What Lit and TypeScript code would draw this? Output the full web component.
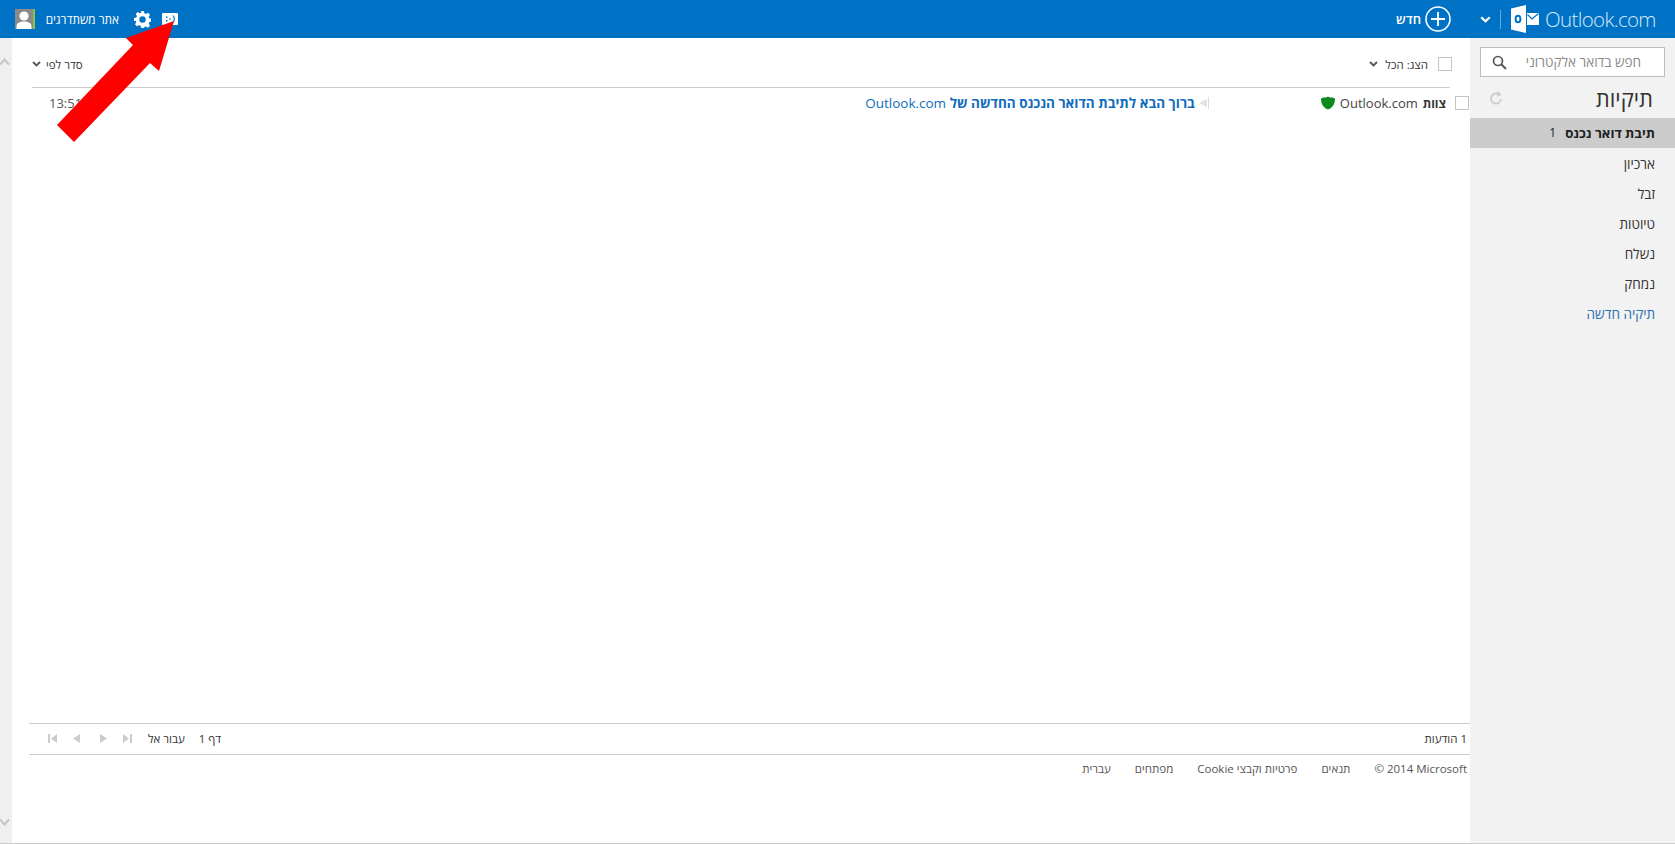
import { LitElement, html, css, svg } from "lit";
import { customElement } from "lit/decorators.js";

const chev = (c: string, w = 9, h = 6) => html`<svg width=${w} height=${h} viewBox="0 0 9 6" preserveAspectRatio="none"><path d="M1 1l3.500 3.500L8 1" fill="none" stroke=${c} stroke-width="1.800"/></svg>`;

@customElement("app-root")
export class AppRoot extends LitElement {
  static styles = css`
    :host { display: block; position: relative; width: 1675px; height: 844px; overflow: hidden; background: #fff;
      font-family: "Open Sans", "Liberation Sans", sans-serif; font-size: 11.5px; color: #333; }
    .top { height: 38px; background: #0072c6; color: #fff; display: flex; justify-content: space-between; align-items: center; }
    .tl, .tr { display: flex; align-items: center; }
    .tl { padding-left: 15px; }
    .tr { padding-right: 19px; }
    .avatar { width: 20px; height: 20px; display: block; }
    .user { margin-left: 10px; width: 74px; font-size: 11.8px; white-space: nowrap; }
    .gear { margin-left: 15px; display: block; }
    .smile { margin-left: 11px; display: block; }
    .new { font-size: 13px; font-weight: 600; margin-right: 4px; }
    .plus { display: block; margin-right: 29px; }
    .sep { width: 1px; height: 19px; background: #6aa8d9; margin: 0 9px; }
    .logo { display: block; margin-right: 6px; }
    .brand { font-size: 20.5px; font-weight: 300; color: #d5e8f6; letter-spacing: -0.65px; line-height: 38px; width: 111px; white-space: nowrap; }
    .body { height: 805px; display: flex; border-bottom: 1px solid #ccc; }
    .scroll { width: 12px; background: #efefef; display: flex; flex-direction: column; justify-content: space-between; align-items: flex-start; padding: 20px 0 17px; box-sizing: border-box; }
    .main { flex: 1; display: flex; flex-direction: column; min-width: 0; }
    .tools { height: 50px; margin: 0 20px; box-sizing: border-box; border-bottom: 1px solid #ccc; display: flex; justify-content: space-between; align-items: center; padding-top: 3px; }
    .tools > div { display: flex; align-items: center; }
    .sort { gap: 5px; }
    .show { gap: 7px; margin-right: -2px; }
    .cb { width: 12px; height: 12px; border: 1px solid #c4c4c4; background: #fff; display: block; }
    .show .cb { margin-left: 3px; }
    .list { flex: 1; }
    .row { height: 30px; padding: 0 1px 0 37px; display: flex; align-items: center; }
    .time { font-size: 13px; color: #555; flex: 1; }
    .subject { color: #0f6cbd; font-size: 13.5px; white-space: nowrap; direction: rtl; }
    .subject b { font-weight: 700; }
    .flag { display: block; margin: 0 112px 0 3px; }
    .from { font-size: 13px; display: flex; align-items: center; gap: 5px; color: #444; white-space: nowrap; margin-right: 9px; }
    .from b { color: #333; font-weight: 700; font-size: 12px; }
    .pager { margin-left: 17px; height: 32px; box-sizing: border-box; border-top: 1px solid #ccc; border-bottom: 1px solid #ccc; display: flex; justify-content: space-between; align-items: center; padding: 0 3px 1px 19px; color: #333; }
    .nav { display: flex; align-items: center; gap: 16px; }
    .mid { margin-left: 4px; }
    .page { margin-left: -2px; }
    .foot { margin-left: 17px; height: 88px; padding: 5px 3px 0 0; box-sizing: border-box; display: flex; justify-content: flex-end; gap: 24px; color: #555; font-size: 11.5px; line-height: 18px; }
    .side { width: 205px; background: #f2f2f2; padding-top: 9px; box-sizing: border-box; }
    .search { margin: 0 10px; height: 30px; box-sizing: border-box; border: 1px solid #bdbdbd; background: #fff; display: flex; align-items: center; justify-content: space-between; padding: 0 23px 0 11px; color: #8a8a8a; font-size: 13.5px; }
    .title { height: 41px; padding: 0 22px 0 20px; display: flex; align-items: center; justify-content: space-between; font-size: 22px; color: #333; }
    .folder { height: 30px; line-height: 30px; direction: rtl; padding-right: 20px; font-size: 13.5px; color: #333; }
    .folder.on { background: #ccc; font-weight: 700; font-size: 13.2px; display: flex; gap: 9px; margin-bottom: 1px; color: #222; }
    .folder.on span { font-weight: 400; font-size: 12px; }
    .folder.link { color: #2a6db0; }
    .arrow { position: absolute; left: 0; top: 0; pointer-events: none; display: block; }
  `;

  render() {
    return html`
      <div class="top">
        <div class="tl">
          <svg class="avatar" viewBox="0 0 20 20"><rect width="20" height="20" fill="#8a8a8a"/><rect x="18" width="2" height="20" fill="#8cc63f"/><circle cx="9" cy="7" r="4.600" fill="#fff"/><path d="M1.500 20v-3c0-3 3.500-4.500 7.500-4.500s7.500 1.500 7.500 4.500v3z" fill="#fff"/></svg>
          <span class="user" dir="rtl">אתר משתדרגים</span>
          <svg class="gear" width="17" height="17" viewBox="0 0 24 24"><path fill="#fff" fill-rule="evenodd" d="M10 0h4l.7 3.300 2.200.9 2.800-1.800 2.900 2.900-1.800 2.800.9 2.200 3.300.7v4l-3.300.7-.9 2.200 1.800 2.800-2.900 2.900-2.800-1.800-2.200.9L14 24h-4l-.7-3.300-2.200-.9-2.800 1.800-2.900-2.900 1.800-2.800-.9-2.200L0 14v-4l3.300-.7.9-2.200-1.800-2.800 2.900-2.900 2.800 1.800 2.200-.9zM12 7.500a4.500 4.500 0 1 0 0 9 4.500 4.500 0 0 0 0-9z"/></svg>
          <svg class="smile" width="16" height="12" viewBox="0 0 16 12"><rect width="16" height="12" rx="1" fill="#fff"/><path d="M4 3.500h1.500V5H4zM4 7h1.500v1.500H4zM7 5.500h2v1H7z" fill="#0072c6"/><path d="M11 2.500c1.500 2 1.500 5 0 7" fill="none" stroke="#0072c6" stroke-width="1.200"/></svg>
        </div>
        <div class="tr">
          <span class="new" dir="rtl">חדש</span>
          <svg class="plus" width="26" height="26" viewBox="0 0 26 26"><circle cx="13" cy="13" r="12" fill="none" stroke="#fff" stroke-width="1.600"/><path d="M13 6v14M6 13h14" stroke="#fff" stroke-width="1.800"/></svg>
          ${chev("#fff", 11, 7)}
          <span class="sep"></span>
          <svg class="logo" width="29" height="28" viewBox="0 0 29 28"><path d="M1 3.500L16 0v28L1 24.500z" fill="#fff"/><ellipse cx="8" cy="14" rx="2.400" ry="3.300" fill="none" stroke="#0072c6" stroke-width="2"/><rect x="17" y="8" width="12" height="12" fill="#fff"/><path d="M17.500 9.500l4.500 4.500 6.500-5.500" fill="none" stroke="#0072c6" stroke-width="1.200"/></svg>
          <span class="brand">Outlook.com</span>
        </div>
      </div>
      <div class="body">
        <div class="scroll">
          <svg width="10" height="8" viewBox="0 0 10 8"><path d="M0 6.500l4.500-5 4.500 5" fill="none" stroke="#c4c4c4" stroke-width="2"/></svg>
          <svg width="10" height="8" viewBox="0 0 10 8"><path d="M0 1.500l4.500 5 4.500-5" fill="none" stroke="#c4c4c4" stroke-width="2"/></svg>
        </div>
        <div class="main">
          <div class="tools">
            <div class="sort">${chev("#555")}<span dir="rtl">סדר לפי</span></div>
            <div class="show">${chev("#555")}<span dir="rtl">הצג: הכל</span><i class="cb"></i></div>
          </div>
          <div class="list">
            <div class="row">
              <span class="time">13:51</span>
              <span class="subject"><b>ברוך הבא לתיבת הדואר הנכנס החדשה של</b> Outlook.com</span>
              <svg class="flag" width="11" height="14" viewBox="0 0 11 14"><path d="M9 3v8L1 7z" fill="#e2e2e2"/><rect x="10" y="1" width="1" height="12" fill="#dcdcdc"/></svg>
              <span class="from">
                <svg width="14" height="14" viewBox="0 0 14 14"><path d="M7 .5c1.500 1 2.500 1.500 3.500.8L14 2.500c0 5-2 9-7 11C2 11.500 0 7.500 0 2.500l3.500-1.200C4.500 2 5.500 1.500 7 .5z" fill="#0c8a1c"/></svg>
                <span>Outlook.com</span><b dir="rtl">צוות</b>
              </span>
              <i class="cb"></i>
            </div>
          </div>
          <div class="pager">
            <div class="nav">
              <svg width="9" height="9" viewBox="0 0 9 9"><path d="M0 0h2v9H0zM9 0v9L3 4.500z" fill="#ccc"/></svg>
              <svg width="7" height="9" viewBox="0 0 7 9"><path d="M7 0v9L0 4.500z" fill="#ccc"/></svg>
              <svg class="mid" width="7" height="9" viewBox="0 0 7 9"><path d="M0 0v9l7-4.500z" fill="#ccc"/></svg>
              <svg width="9" height="9" viewBox="0 0 9 9"><path d="M0 0v9l6-4.500zM7 0h2v9H7z" fill="#ccc"/></svg>
              <span dir="rtl">עבור אל</span>
              <span class="page" dir="rtl">דף 1</span>
            </div>
            <span dir="rtl">1 הודעות</span>
          </div>
          <div class="foot">
            <span dir="rtl">עברית</span><span dir="rtl">מפתחים</span><span dir="rtl">פרטיות וקבצי Cookie</span><span dir="rtl">תנאים</span><span>© 2014 Microsoft</span>
          </div>
        </div>
        <div class="side">
          <div class="search">
            <svg width="15" height="15" viewBox="0 0 15 15"><circle cx="6" cy="6" r="4.500" fill="none" stroke="#555" stroke-width="1.700"/><path d="M9.500 9.500l4.500 4.500" stroke="#555" stroke-width="2"/></svg>
            <span dir="rtl">חפש בדואר אלקטרוני</span>
          </div>
          <div class="title">
            <svg width="13" height="14" viewBox="0 0 13 14"><path d="M11 8a5 5 0 1 1-2-4.500" fill="none" stroke="#ccc" stroke-width="1.800"/><path d="M7.500 0l4 3.500-4 2.500z" fill="#ccc"/></svg>
            <span dir="rtl">תיקיות</span>
          </div>
          <div class="folder on">תיבת דואר נכנס <span>1</span></div>
          <div class="folder">ארכיון</div>
          <div class="folder">זבל</div>
          <div class="folder">טיוטות</div>
          <div class="folder">נשלח</div>
          <div class="folder">נמחק</div>
          <div class="folder link">תיקיה חדשה</div>
        </div>
      </div>
      <svg class="arrow" width="1675" height="844">${svg`<path d="M174 21L126 38l7 7L57 125l17 17 76-79 9 8z" fill="#ff0000"/>`}</svg>
    `;
  }
}
